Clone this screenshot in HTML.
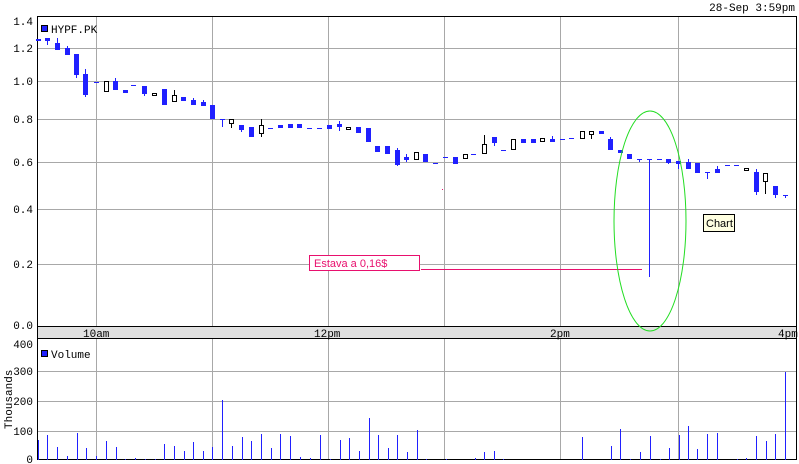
<!DOCTYPE html>
<html><head><meta charset="utf-8"><style>
html,body{margin:0;padding:0;background:#fff;}
svg{display:block;font-family:"Liberation Mono",monospace;font-size:11px;}
</style></head><body>
<svg width="799" height="464" viewBox="0 0 799 464" xmlns="http://www.w3.org/2000/svg">
<rect width="799" height="464" fill="#fff"/>
<text x="795" y="11" text-anchor="end" fill="#000">28-Sep 3:59pm</text>
<!-- grid price -->
<g stroke="#a8a8a8" stroke-width="1">
<line x1="37" y1="48.5" x2="797" y2="48.5"/>
<line x1="37" y1="81.5" x2="797" y2="81.5"/>
<line x1="37" y1="119.5" x2="797" y2="119.5"/>
<line x1="37" y1="162.5" x2="797" y2="162.5"/>
<line x1="37" y1="209.5" x2="797" y2="209.5"/>
<line x1="37" y1="264.5" x2="797" y2="264.5"/>
<line x1="96.5" y1="16" x2="96.5" y2="326"/>
<line x1="212.5" y1="16" x2="212.5" y2="326"/>
<line x1="328.5" y1="16" x2="328.5" y2="326"/>
<line x1="444.5" y1="16" x2="444.5" y2="326"/>
<line x1="560.5" y1="16" x2="560.5" y2="326"/>
<line x1="678.5" y1="16" x2="678.5" y2="326"/>
<line x1="37" y1="371.5" x2="797" y2="371.5"/>
<line x1="37" y1="401.5" x2="797" y2="401.5"/>
<line x1="37" y1="431.5" x2="797" y2="431.5"/>
<line x1="96.5" y1="339" x2="96.5" y2="460"/>
<line x1="212.5" y1="339" x2="212.5" y2="460"/>
<line x1="328.5" y1="339" x2="328.5" y2="460"/>
<line x1="444.5" y1="339" x2="444.5" y2="460"/>
<line x1="560.5" y1="339" x2="560.5" y2="460"/>
<line x1="678.5" y1="339" x2="678.5" y2="460"/>
</g>
<!-- axis band -->
<rect x="37" y="326" width="760" height="13" fill="#e0e0e0"/>
<g stroke="#000" stroke-width="1" fill="none">
<rect x="37.5" y="16.5" width="759" height="443"/>
<line x1="37" y1="326.5" x2="797" y2="326.5"/>
<line x1="37" y1="338.5" x2="797" y2="338.5"/>
</g>
<g fill="#000">
<text x="33" y="25" text-anchor="end">1.4</text>
<text x="33" y="52" text-anchor="end">1.2</text>
<text x="33" y="85" text-anchor="end">1.0</text>
<text x="33" y="123" text-anchor="end">0.8</text>
<text x="33" y="166" text-anchor="end">0.6</text>
<text x="33" y="213" text-anchor="end">0.4</text>
<text x="33" y="268" text-anchor="end">0.2</text>
<text x="33" y="329" text-anchor="end">0.0</text>
<text x="83" y="337">10am</text>
<text x="314" y="337">12pm</text>
<text x="550" y="337">2pm</text>
<text x="778" y="337">4pm</text>
<text x="33" y="348" text-anchor="end">400</text>
<text x="33" y="375" text-anchor="end">300</text>
<text x="33" y="405" text-anchor="end">200</text>
<text x="33" y="435" text-anchor="end">100</text>
<text x="33" y="463" text-anchor="end">0</text>
<text transform="translate(12,429) rotate(-90)">Thousands</text>
<text x="51" y="33">HYPF.PK</text>
<text x="51" y="358">Volume</text>
</g>
<rect x="41.5" y="25.5" width="6" height="6" fill="#2020ff" stroke="#000"/>
<rect x="41.5" y="350.5" width="6" height="6" fill="#2020ff" stroke="#000"/>
<!-- candles -->
<g fill="#2020ff">
<rect x="36" y="39" width="5" height="2"/>
<rect x="45" y="38" width="5" height="3"/><rect x="47" y="38" width="1" height="7"/>
<rect x="55" y="43" width="5" height="7"/><rect x="57" y="38" width="1" height="6"/>
<rect x="65" y="48" width="5" height="7"/><rect x="67" y="46" width="1" height="3"/>
<rect x="74" y="54" width="5" height="21"/><rect x="76" y="74" width="1" height="4"/>
<rect x="83" y="74" width="5" height="21"/><rect x="85" y="69" width="1" height="28"/>
<rect x="94" y="82" width="5" height="1"/>
<rect x="113" y="81" width="5" height="9"/><rect x="115" y="78" width="1" height="3"/>
<rect x="123" y="90" width="5" height="3"/>
<rect x="131" y="85" width="5" height="1"/>
<rect x="142" y="86" width="5" height="8"/><rect x="144" y="93" width="1" height="3"/>
<rect x="162" y="89" width="5" height="16"/>
<rect x="181" y="97" width="5" height="4"/>
<rect x="191" y="100" width="5" height="5"/><rect x="193" y="98" width="1" height="3"/>
<rect x="201" y="102" width="5" height="4"/><rect x="203" y="100" width="1" height="3"/>
<rect x="210" y="105" width="5" height="14"/>
<rect x="220" y="119" width="5" height="1"/><rect x="222" y="119" width="1" height="8"/>
<rect x="239" y="125" width="5" height="5"/><rect x="241" y="129" width="1" height="3"/>
<rect x="249" y="127" width="5" height="10"/>
<rect x="268" y="128" width="5" height="1"/>
<rect x="278" y="125" width="5" height="3"/>
<rect x="288" y="124" width="5" height="4"/>
<rect x="297" y="124" width="5" height="4"/>
<rect x="307" y="128" width="5" height="1"/>
<rect x="317" y="128" width="5" height="1"/>
<rect x="327" y="125" width="5" height="4"/>
<rect x="337" y="124" width="5" height="3"/><rect x="339" y="121" width="1" height="10"/>
<rect x="356" y="127" width="5" height="6"/>
<rect x="366" y="128" width="5" height="14"/>
<rect x="375" y="146" width="5" height="6"/>
<rect x="385" y="146" width="5" height="8"/>
<rect x="395" y="150" width="5" height="15"/><rect x="397" y="148" width="1" height="18"/>
<rect x="404" y="157" width="5" height="3"/><rect x="406" y="154" width="1" height="8"/>
<rect x="423" y="154" width="5" height="8"/>
<rect x="433" y="163" width="5" height="1"/>
<rect x="443" y="157" width="5" height="1"/>
<rect x="453" y="157" width="5" height="7"/>
<rect x="471" y="154" width="5" height="1"/>
<rect x="492" y="137" width="5" height="6"/><rect x="494" y="142" width="1" height="4"/>
<rect x="501" y="150" width="5" height="1"/>
<rect x="521" y="139" width="5" height="4"/>
<rect x="531" y="139" width="5" height="4"/>
<rect x="550" y="139" width="5" height="3"/><rect x="552" y="136" width="1" height="4"/>
<rect x="560" y="139" width="5" height="1"/>
<rect x="569" y="138" width="5" height="1"/>
<rect x="599" y="131" width="5" height="3"/>
<rect x="608" y="139" width="5" height="11"/><rect x="610" y="137" width="1" height="3"/>
<rect x="618" y="150" width="5" height="3"/>
<rect x="627" y="154" width="5" height="5"/>
<rect x="637" y="159" width="5" height="1"/><rect x="639" y="159" width="1" height="3"/>
<rect x="647" y="159" width="5" height="1"/><rect x="649" y="159" width="1" height="118"/>
<rect x="657" y="159" width="5" height="1"/>
<rect x="666" y="159" width="5" height="4"/><rect x="668" y="162" width="1" height="2"/>
<rect x="676" y="161" width="5" height="3"/><rect x="678" y="163" width="1" height="6"/>
<rect x="686" y="162" width="5" height="7"/><rect x="688" y="159" width="1" height="3"/>
<rect x="695" y="163" width="5" height="10"/>
<rect x="705" y="172" width="5" height="1"/><rect x="707" y="172" width="1" height="7"/>
<rect x="715" y="169" width="5" height="4"/><rect x="717" y="166" width="1" height="3"/>
<rect x="725" y="165" width="5" height="1"/>
<rect x="734" y="165" width="5" height="1"/>
<rect x="754" y="172" width="5" height="20"/><rect x="756" y="169" width="1" height="26"/>
<rect x="773" y="186" width="5" height="9"/><rect x="775" y="195" width="1" height="3"/>
<rect x="783" y="195" width="5" height="1"/><rect x="785" y="195" width="1" height="3"/>
</g>
<g fill="#fff" stroke="#000" stroke-width="1">
<rect x="104.5" y="81.5" width="4" height="10"/>
<rect x="152.5" y="93.5" width="4" height="2"/>
<rect x="172.5" y="95.5" width="4" height="6"/><line x1="174.5" y1="90" x2="174.5" y2="95"/>
<rect x="229.5" y="119.5" width="4" height="4"/><line x1="231.5" y1="124" x2="231.5" y2="128"/>
<rect x="259.5" y="125.5" width="4" height="8"/><line x1="261.5" y1="119" x2="261.5" y2="125"/><line x1="261.5" y1="134" x2="261.5" y2="137"/>
<rect x="346.5" y="127.5" width="4" height="2"/>
<rect x="414.5" y="152.5" width="4" height="7"/>
<rect x="463.5" y="154.5" width="4" height="4"/>
<rect x="482.5" y="144.5" width="4" height="9"/><line x1="484.5" y1="135" x2="484.5" y2="144"/>
<rect x="511.5" y="139.5" width="4" height="10"/>
<rect x="540.5" y="138.5" width="4" height="3"/>
<rect x="580.5" y="131.5" width="4" height="7"/>
<rect x="589.5" y="131.5" width="4" height="3"/><line x1="591.5" y1="135" x2="591.5" y2="139"/>
<rect x="744.5" y="168.5" width="4" height="2"/>
<rect x="763.5" y="173.5" width="4" height="8"/><line x1="765.5" y1="182" x2="765.5" y2="194"/>
</g>
<!-- volume -->
<g stroke="#2020ff" stroke-width="1">
<path d="M38.5 460V440M47.5 460V435M57.5 460V447M67.5 460V456M77.5 460V433M86.5 460V448M96.5 460V456M106.5 460V441M116.5 460V447M125.5 460V459M135.5 460V458M145.5 460V459M155.5 460V459M164.5 460V444M174.5 460V446M184.5 460V451M193.5 460V442M203.5 460V451M212.5 460V447M222.5 460V400M232.5 460V446M242.5 460V437M251.5 460V441M261.5 460V434M271.5 460V448M280.5 460V434M290.5 460V436M300.5 460V457M310.5 460V458M320.5 460V435M330.5 460V459M340.5 460V440M349.5 460V438M359.5 460V451M369.5 460V418M378.5 460V435M388.5 460V448M397.5 460V435M407.5 460V452M417.5 460V430M426.5 460V459M446.5 460V459M475.5 460V458M484.5 460V452M494.5 460V451M503.5 460V459M582.5 460V437M611.5 460V446M620.5 460V429M630.5 460V459M640.5 460V452M650.5 460V436M660.5 460V459M669.5 460V448M679.5 460V435M688.5 460V426M697.5 460V449M707.5 460V434M717.5 460V433M737.5 460V459M746.5 460V458M756.5 460V436M766.5 460V441M775.5 460V434M785.5 460V372"/>
</g>
<!-- annotation -->
<rect x="309.5" y="255.5" width="110" height="15" fill="#fff" stroke="#e8106e"/>
<text x="314" y="267" fill="#e8106e" font-family="'Liberation Sans',sans-serif" font-size="11">Estava a 0,16$</text>
<line x1="421" y1="269.5" x2="642" y2="269.5" stroke="#e8106e"/>
<rect x="442" y="189" width="1" height="1" fill="#e8106e"/>
<ellipse cx="650" cy="221" rx="36" ry="110" fill="none" stroke="#22dd22" stroke-width="1"/>
<rect x="703.5" y="214.5" width="31" height="17" fill="#ffffe1" stroke="#000"/>
<text x="706" y="227" fill="#000" font-family="'Liberation Sans',sans-serif" font-size="11">Chart</text>
</svg>
</body></html>
